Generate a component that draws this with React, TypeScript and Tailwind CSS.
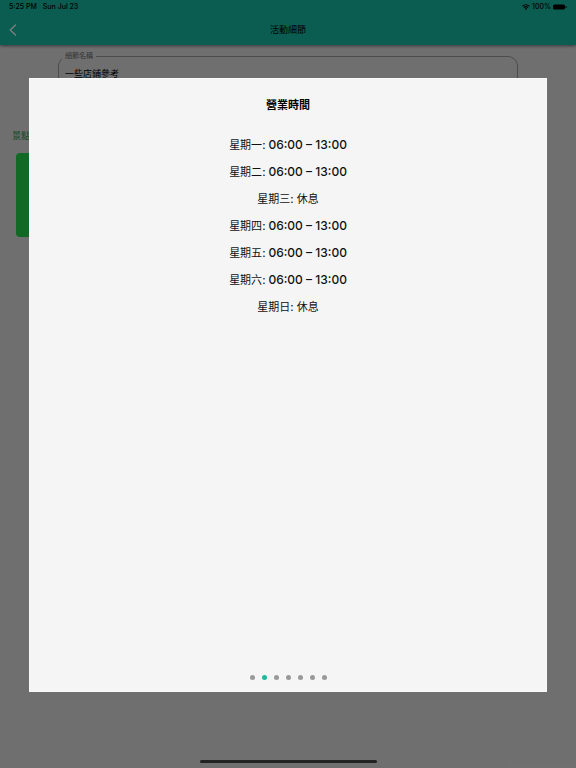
import { useState } from "react";

const openingHours = [
    { day: "星期一", hours: "06:00 – 13:00" },
    { day: "星期二", hours: "06:00 – 13:00" },
    { day: "星期三", hours: null },
    { day: "星期四", hours: "06:00 – 13:00" },
    { day: "星期五", hours: "06:00 – 13:00" },
    { day: "星期六", hours: "06:00 – 13:00" },
    { day: "星期日", hours: null },
];

const pages = [0, 1, 2, 3, 4, 5, 6];

function StatusBar() {
    return (
        <div className="flex h-[14px] items-center justify-between px-[9px] text-[7px] leading-[14px] font-medium">
            <div className="flex gap-[6px]">
                <span>5:25 PM</span>
                <span>Sun Jul 23</span>
            </div>
            <div className="flex items-center gap-[2px]">
                <svg width="8" height="6" viewBox="0 0 16 12" fill="none" stroke="currentColor" strokeWidth="2.2">
                    <path d="M1 4.5a10 10 0 0 1 14 0" />
                    <path d="M3.8 7.4a6 6 0 0 1 8.4 0" />
                    <path d="M8 12 5.6 9.4a3.4 3.4 0 0 1 4.8 0z" fill="currentColor" stroke="none" />
                </svg>
                <span>100%</span>
                <svg width="14" height="6" viewBox="0 0 28 12" fill="currentColor">
                    <rect x="0" y="1" width="24" height="10" rx="3" />
                    <rect x="25" y="4" width="2" height="4" rx="1" />
                </svg>
            </div>
        </div>
    );
}

export default function App() {
    const [activePage, setActivePage] = useState(1);

    return (
        <div className="relative flex min-h-screen flex-col bg-[#dfdfdf] font-['Inter','Noto_Sans_CJK_TC',sans-serif] text-black">
            {/* Header */}
            <header className="h-[45px] bg-[#14bba0] shadow-[0_1px_3px_rgba(0,0,0,0.5)]">
                <StatusBar />
                <div className="grid h-[31px] grid-cols-[1fr_auto_1fr] items-center px-[9px]">
                    <button type="button" aria-label="Back" className="justify-self-start text-white">
                        <svg
                            width="8"
                            height="12"
                            viewBox="0 0 8 12"
                            fill="none"
                            stroke="currentColor"
                            strokeWidth="1.3"
                            strokeLinecap="round"
                            strokeLinejoin="round"
                        >
                            <path d="M6.5 1 1.2 6l5.3 5" />
                        </svg>
                    </button>
                    <h1 className="text-[9px] leading-[14px]">活動細節</h1>
                </div>
            </header>

            {/* Activity details */}
            <main className="flex-1">
                <fieldset className="mx-[58px] mt-[6px] h-[42px] rounded-[10px] border border-[#999] pl-[3px]">
                    <legend className="px-[3px] text-[7px] leading-[10px] text-[#666]">
                        <label htmlFor="detail-name">細節名稱</label>
                    </legend>
                    <input
                        id="detail-name"
                        readOnly
                        defaultValue="一些店鋪參考"
                        className="mt-[4px] block h-[16px] w-full bg-transparent px-[3px] text-[9px] outline-none"
                    />
                </fieldset>
                <h2 className="mt-[36px] pl-[12px] text-[9px] leading-[14px] font-medium text-[#3c9c5c]">景點</h2>
                <button
                    type="button"
                    aria-label="景點"
                    className="mt-[10px] ml-[16px] block h-[84px] w-[120px] rounded-[4px] bg-[#24d24c]"
                />
            </main>
            <div className="mx-auto mb-[5px] h-[3px] w-[177px] rounded-full bg-[#444]" />

            {/* Opening hours modal */}
            <div className="absolute inset-0 flex bg-black/50 px-[29px] pt-[78px] pb-[76px]">
                <section
                    role="dialog"
                    aria-modal="true"
                    aria-labelledby="hours-title"
                    className="flex flex-1 flex-col items-center border border-[#fafafa] bg-[#f5f5f5] pt-[17px] pb-[11px]"
                >
                    <h2 id="hours-title" className="text-[11px] leading-[18px] font-bold">
                        營業時間
                    </h2>
                    <ul className="mt-[18px] text-center text-[11px] leading-[27px] text-[#111]">
                        {openingHours.map((item) => (
                            <li key={item.day}>
                                {item.day}
                                <span className="font-medium">: </span>
                                {item.hours ? (
                                    <span className="text-[12px] leading-none font-medium">{item.hours}</span>
                                ) : (
                                    <span>休息</span>
                                )}
                            </li>
                        ))}
                    </ul>
                    <div className="mt-auto flex gap-[7px]">
                        {pages.map((page) => (
                            <button
                                key={page}
                                type="button"
                                aria-label={`Page ${page + 1}`}
                                onClick={() => setActivePage(page)}
                                className={`size-[5px] rounded-full ${
                                    activePage === page ? "bg-[#1abc9c]" : "bg-[#999]"
                                }`}
                            />
                        ))}
                    </div>
                </section>
            </div>
        </div>
    );
}
